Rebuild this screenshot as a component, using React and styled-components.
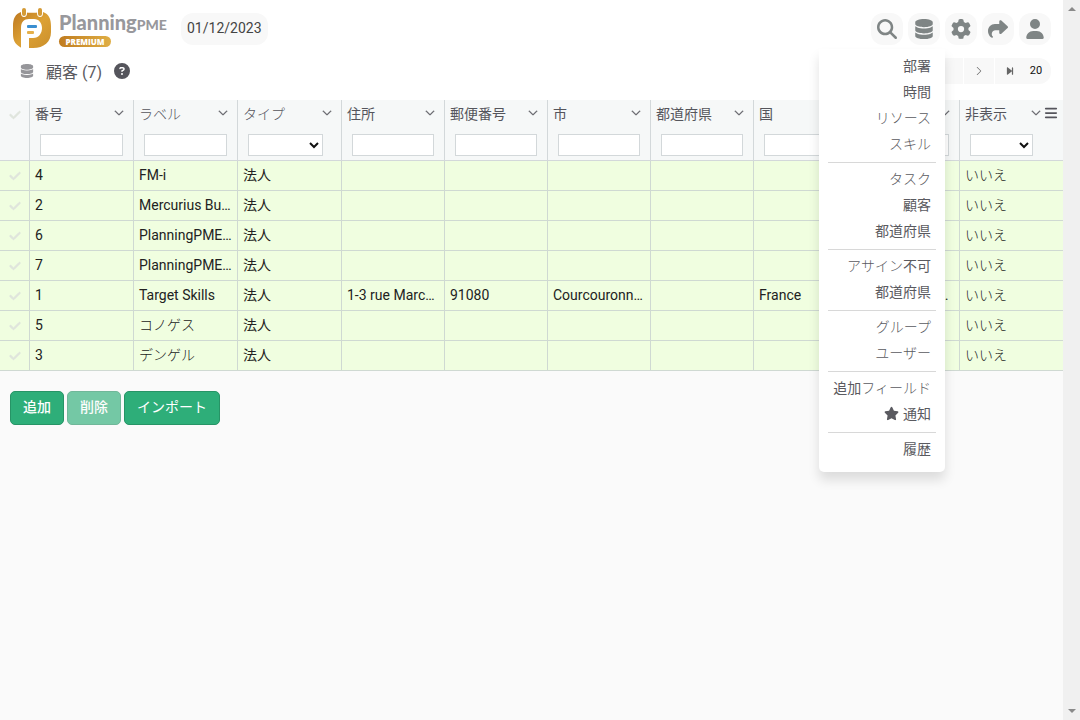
import React from 'react';
import styled, { createGlobalStyle } from 'styled-components';
import {
  FaMagnifyingGlass,
  FaDatabase,
  FaGear,
  FaShare,
  FaUser,
  FaCircleQuestion,
  FaStar,
  FaCheck,
  FaBars,
  FaForwardStep,
  FaBackwardStep,
} from 'react-icons/fa6';
import { BsChevronDown, BsChevronLeft, BsChevronRight } from 'react-icons/bs';

const GlobalStyle = createGlobalStyle`
  * {
    box-sizing: border-box;
  }

  body {
    margin: 0;
    background-color: #fafafa;
    color: #222;
    font-family: Roboto, 'Noto Sans CJK JP', sans-serif;
    font-size: 14px;
  }

  button, input, select {
    font: inherit;
    color: inherit;
  }
`;

const Shell = styled.div`
  display: flex;
  align-items: stretch;
  min-height: 100vh;
`;

const Page = styled.main`
  flex: 1;
  min-width: 0;
`;

const ScrollTrack = styled.div`
  display: flex;
  flex-direction: column;
  justify-content: space-between;
  align-items: center;
  width: 17px;
  padding: 7px 0;
  background-color: #f0f0f0;
`;

const Top = styled.div`
  padding-bottom: 16px;
  background-color: white;
`;

const Header = styled.header`
  display: flex;
  align-items: center;
  height: 58px;
  padding: 0 12px;
`;

const Brand = styled.a`
  display: flex;
  align-items: center;
  gap: 7px;
  color: #98989c;
  text-decoration: none;
`;

const BrandText = styled.span`
  display: flex;
  flex-direction: column;
  align-items: flex-start;
  width: 108px;
`;

const BrandName = styled.span`
  font-family: Lato, sans-serif;
  font-size: 20px;
  font-weight: 900;
  line-height: 22px;
`;

const BrandSuffix = styled.span`
  font-size: 14px;
`;

const PremiumTag = styled.span`
  width: 52px;
  border-radius: 6px;
  background: linear-gradient(90deg, #c07c1f, #dfae45);
  color: white;
  font-family: 'Open Sans', sans-serif;
  font-size: 8px;
  font-weight: 800;
  line-height: 11px;
  text-align: center;
`;

const DateButton = styled.button`
  height: 32px;
  margin-left: 14px;
  padding: 0 6px 2px;
  border: none;
  border-radius: 12px;
  background-color: #f8f8f8;
  color: #444;
`;

const Toolbar = styled.nav`
  display: flex;
  gap: 5px;
  margin-left: auto;
`;

const ToolItem = styled.div`
  position: relative;
`;

const ToolButton = styled.button`
  display: flex;
  align-items: center;
  justify-content: center;
  width: 32px;
  height: 32px;
  padding: 0;
  border: none;
  border-radius: 12px;
  background-color: #f8f8f8;
  color: #7f8585;
  font-size: 20px;
`;

const Menu = styled.div`
  position: absolute;
  top: 36px;
  right: -5px;
  z-index: 10;
  width: 126px;
  padding: 4px 0 10px;
  border-radius: 0 0 5px 5px;
  background-color: white;
  box-shadow: 0 8px 12px rgba(0, 0, 0, 0.12);
`;

const MenuLink = styled.a`
  display: flex;
  align-items: center;
  justify-content: flex-end;
  gap: 4px;
  height: 26px;
  padding: 0 14px 2px 0;
  color: #5a5a60;
  text-decoration: none;
  white-space: nowrap;
`;

const MenuDivider = styled.hr`
  height: 1px;
  margin: 5px 9px 3px;
  border: none;
  background-color: #d8d8d8;
`;

const MenuStar = styled(FaStar)`
  font-size: 15px;
`;

const Kana = styled.span`
  font-weight: 300;
`;

const TitleBar = styled.div`
  display: flex;
  align-items: center;
  height: 26px;
  padding: 0 12px 0 20px;
`;

const TitleIcon = styled(FaDatabase)`
  color: #96969a;
  font-size: 14px;
`;

const Title = styled.h1`
  margin: 0 12px;
  color: #5a5a60;
  font-size: 16px;
  font-weight: 400;
`;

const HelpButton = styled.button`
  display: flex;
  padding: 0;
  border: none;
  background: none;
  color: #55555c;
  font-size: 16px;
`;

const Pager = styled.div`
  display: flex;
  gap: 1px;
  height: 26px;
  margin-left: auto;
  border-radius: 12px;
  background-color: white;
  overflow: hidden;
`;

const PagerButton = styled.button`
  display: flex;
  align-items: center;
  justify-content: center;
  width: 30px;
  padding: 0;
  border: none;
  background-color: #f8f8f8;
  color: #666;
  font-size: 10px;
`;

const PageInput = styled.input`
  width: 60px;
  border: none;
  background-color: #f8f8f8;
`;

const LastPage = styled.div`
  display: flex;
  background-color: #f8f8f8;
`;

const PageSize = styled.button`
  width: 26px;
  padding: 0 4px 2px 0;
  border: none;
  background: none;
  color: #111;
  font-size: 11px;
`;

const Table = styled.table`
  width: 100%;
  border-collapse: separate;
  border-spacing: 0;
  table-layout: fixed;
`;

const Col = styled.col`
  width: ${props => (props.$width ? `${props.$width}px` : 'auto')};
`;

const HeadCell = styled.th`
  padding: 0;
  border-right: 1px solid #d3d8da;
  border-bottom: 1px solid #d3d8da;
  background-color: #f6f8f8;
  color: #55555c;
  font-weight: 400;
  vertical-align: top;

  &:last-child {
    border-right: none;
  }
`;

const HeadTop = styled.div`
  display: flex;
  align-items: center;
  justify-content: space-between;
  height: 28px;
  padding: 0 5px 2px;
`;

const HeadActions = styled.span`
  display: flex;
  align-items: center;
  gap: 3px;
  padding-right: ${props => (props.$end ? '0' : '4px')};
`;

const IconButton = styled.button`
  display: flex;
  padding: 0;
  border: none;
  background: none;
  font-size: ${props => props.$size || 10}px;
`;

const Chevron = styled(BsChevronDown)`
  stroke: currentColor;
  stroke-width: 1px;
`;

const Filter = styled.div`
  height: 32px;
  padding: 6px ${props => props.$right}px 0 10px;
`;

const FilterInput = styled.input`
  display: block;
  width: 100%;
  height: 22px;
  border: 1px solid #d3d8da;
  background-color: white;
`;

const FilterSelect = styled(FilterInput)`
  padding: 0;
  border-radius: 0;
  color: #111;
`;

const CheckHolder = styled.div`
  display: flex;
  align-items: center;
  justify-content: center;
  height: 29px;
  color: #dfe4dc;
  font-size: 12px;
`;

const Check = styled(FaCheck)`
  stroke: currentColor;
  stroke-width: 40px;
`;

const Cell = styled.td`
  height: 30px;
  padding: 0 3px 2px 5px;
  border-right: 1px solid #cfd9d2;
  border-bottom: 1px solid #cfd9d2;
  background-color: #f0fee0;
  line-height: 20px;
  overflow: hidden;
  text-overflow: ellipsis;
  white-space: nowrap;

  &:last-child {
    border-right: none;
  }
`;

const CheckCell = styled(Cell)`
  padding: 0;
`;

const Actions = styled.div`
  display: flex;
  gap: 3px;
  padding: 20px 10px;
`;

const ActionButton = styled.button`
  height: 34px;
  padding: 0 12px 4px;
  border: 1px solid #279466;
  border-radius: 5px;
  background-color: #2eae79;
  color: white;
  font-weight: ${props => (props.$strong ? 500 : 400)};

  &:disabled {
    opacity: 0.65;
  }
`;

const menuGroups = [
  ['部署', '時間', 'リソース', 'スキル'],
  ['タスク', '顧客', '都道府県'],
  ['アサイン不可', '都道府県'],
  ['グループ', 'ユーザー'],
  ['追加フィールド', '通知'],
  ['履歴'],
];

const columns = [
  { key: 'id', label: '番号', width: 104 },
  { key: 'name', label: 'ラベル', width: 104 },
  { key: 'type', label: 'タイプ', width: 104, options: ['', '法人'], right: 18 },
  { key: 'address', label: '住所' },
  { key: 'zip', label: '郵便番号' },
  { key: 'city', label: '市' },
  { key: 'state', label: '都道府県' },
  { key: 'country', label: '国' },
  { key: 'phone', label: '電話' },
  { key: 'hidden', label: '非表示', options: ['', 'いいえ'], right: 30 },
];

const customers = [
  { id: '4', name: 'FM-i' },
  { id: '2', name: 'Mercurius Business' },
  { id: '6', name: 'PlanningPME France' },
  { id: '7', name: 'PlanningPME Japan' },
  {
    id: '1',
    name: 'Target Skills',
    address: '1-3 rue Marcel Carné',
    zip: '91080',
    city: 'Courcouronnes Cedex',
    country: 'France',
    phone: '+33 1 64 97 62 62 00',
  },
  { id: '5', name: 'コノゲス' },
  { id: '3', name: 'デンゲル' },
].map(customer => ({ ...customer, type: '法人', hidden: 'いいえ' }));

// kana runs are set lighter than the kanji next to them
const renderText = (text = '') =>
  text
    .split(/([\u3040-\u30ff]+)/)
    .filter(Boolean)
    .map((part, index) => (/[\u3040-\u30ff]/.test(part) ? <Kana key={index}>{part}</Kana> : part));

const Logo = () => (
  <svg width="40" height="42" viewBox="0 0 40 42" aria-hidden="true">
    <defs>
      <linearGradient id="gold" x1="0" y1="0" x2="1" y2="1">
        <stop offset="0" stopColor="#bd7820" />
        <stop offset="0.5" stopColor="#dca135" />
        <stop offset="1" stopColor="#cb8f2b" />
      </linearGradient>
    </defs>
    <path
      d="M9 4C3 6 1 11 1 18v8c0 6 2 10 7 13 1 1 2 1 3 1h10c11 0 18-6 18-16v-6c0-7-2-12-8-14-4 1-18 1-22 0z"
      fill="url(#gold)"
    />
    <path d="M9 40V20c0-6 3-9 8-9h5c5 0 8 4 8 9s-3 10-9 10h-4v10h-8z" fill="#fff" />
    <path d="M9 3v2q0 4 3 4t3-4V3M25 3v2q0 4 3 4t3-4V3" fill="#fff" />
    <rect x="10" y="0" width="4" height="8" rx="2" fill="#d49a35" />
    <rect x="26" y="0" width="4" height="8" rx="2" fill="#d49a35" />
    <rect x="15" y="17" width="10" height="3" rx="1" fill="#3b8fd0" />
    <rect x="15" y="23" width="7" height="3" rx="1" fill="#e5b04a" />
  </svg>
);

const DatabaseMenu = () => (
  <Menu>
    {menuGroups.map((group, index) => (
      <React.Fragment key={index}>
        {index > 0 && <MenuDivider />}
        {group.map(label => (
          <MenuLink href="#" key={label}>
            {label === '通知' && <MenuStar />}
            <span>{renderText(label)}</span>
          </MenuLink>
        ))}
      </React.Fragment>
    ))}
  </Menu>
);

const ColumnHead = ({ column, last }) => (
  <HeadCell scope="col">
    <HeadTop>
      <span>{renderText(column.label)}</span>
      <HeadActions $end={last}>
        <IconButton type="button" aria-label={column.label}><Chevron /></IconButton>
        {last && <IconButton type="button" aria-label="列" $size={14}><FaBars /></IconButton>}
      </HeadActions>
    </HeadTop>
    <Filter $right={column.right || 10}>
      {column.options ? (
        <FilterSelect as="select" aria-label={column.label}>
          {column.options.map(option => <option key={option}>{option}</option>)}
        </FilterSelect>
      ) : (
        <FilterInput type="text" aria-label={column.label} />
      )}
    </Filter>
  </HeadCell>
);

const App = () => {
  return (
    <Shell>
      <GlobalStyle />
      <Page>
        <Top>
          <Header>
            <Brand href="#">
              <Logo />
              <BrandText>
                <BrandName>Planning<BrandSuffix>PME</BrandSuffix></BrandName>
                <PremiumTag>PREMIUM</PremiumTag>
              </BrandText>
            </Brand>
            <DateButton type="button">01/12/2023</DateButton>
            <Toolbar>
              <ToolButton type="button" aria-label="検索"><FaMagnifyingGlass /></ToolButton>
              <ToolItem>
                <ToolButton type="button" aria-label="データ"><FaDatabase /></ToolButton>
                <DatabaseMenu />
              </ToolItem>
              <ToolButton type="button" aria-label="設定"><FaGear /></ToolButton>
              <ToolButton type="button" aria-label="共有"><FaShare /></ToolButton>
              <ToolButton type="button" aria-label="アカウント"><FaUser /></ToolButton>
            </Toolbar>
          </Header>
          <TitleBar>
            <TitleIcon />
            <Title>顧客 (7)</Title>
            <HelpButton type="button" aria-label="ヘルプ"><FaCircleQuestion /></HelpButton>
            <Pager>
              <PagerButton type="button" aria-label="最初"><FaBackwardStep /></PagerButton>
              <PagerButton type="button" aria-label="前"><BsChevronLeft /></PagerButton>
              <PageInput type="text" aria-label="ページ" />
              <PagerButton type="button" aria-label="次"><BsChevronRight /></PagerButton>
              <LastPage>
                <PagerButton type="button" aria-label="最後"><FaForwardStep /></PagerButton>
                <PageSize type="button">20</PageSize>
              </LastPage>
            </Pager>
          </TitleBar>
        </Top>
        <Table>
          <colgroup>
            <Col $width={30} />
            {columns.map(column => <Col key={column.key} $width={column.width} />)}
          </colgroup>
          <thead>
            <tr>
              <HeadCell scope="col">
                <CheckHolder><Check /></CheckHolder>
              </HeadCell>
              {columns.map((column, index) => (
                <ColumnHead key={column.key} column={column} last={index === columns.length - 1} />
              ))}
            </tr>
          </thead>
          <tbody>
            {customers.map(customer => (
              <tr key={customer.id}>
                <CheckCell>
                  <CheckHolder><Check /></CheckHolder>
                </CheckCell>
                {columns.map(column => (
                  <Cell key={column.key}>{renderText(customer[column.key])}</Cell>
                ))}
              </tr>
            ))}
          </tbody>
        </Table>
        <Actions>
          <ActionButton type="button" $strong>追加</ActionButton>
          <ActionButton type="button" $strong disabled>削除</ActionButton>
          <ActionButton type="button">インポート</ActionButton>
        </Actions>
      </Page>
      <ScrollTrack>
        <svg width="8" height="4" viewBox="0 0 8 4"><path d="M0 4 4 0 8 4z" fill="#8a8a8a" /></svg>
        <svg width="8" height="4" viewBox="0 0 8 4"><path d="M0 0 4 4 8 0z" fill="#8a8a8a" /></svg>
      </ScrollTrack>
    </Shell>
  );
};

export default App;
